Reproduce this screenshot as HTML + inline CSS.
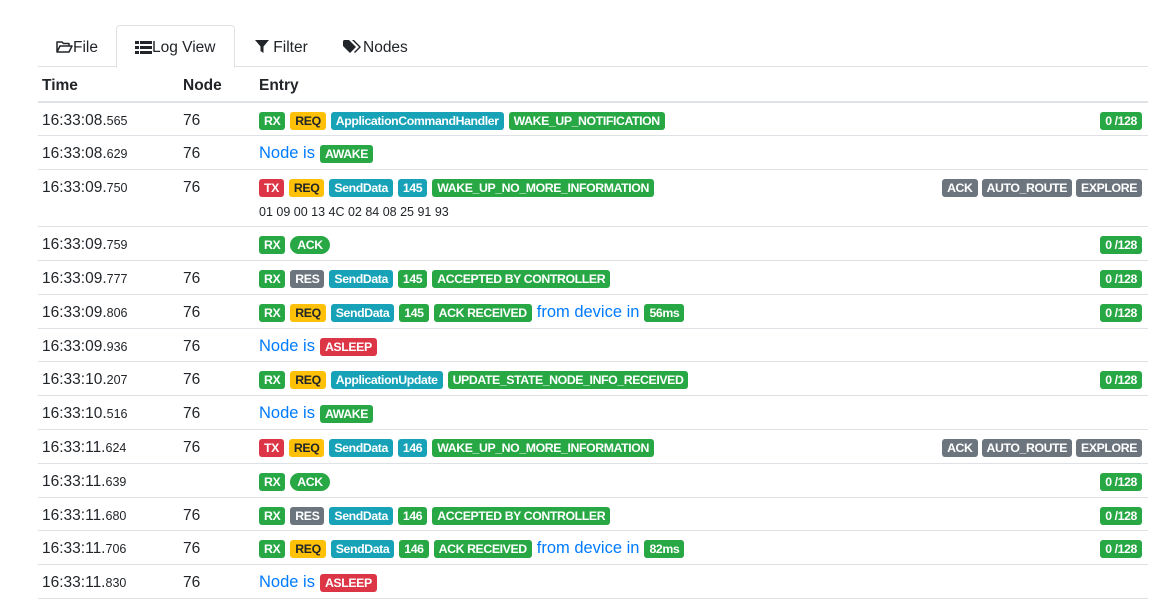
<!DOCTYPE html>
<html><head><meta charset="utf-8"><style>
*{box-sizing:border-box;margin:0;padding:0}
body{width:1174px;height:600px;background:#fff;font-family:"Liberation Sans",sans-serif;color:#212529;position:relative;overflow:hidden}
.tabs{position:absolute;left:38px;top:25px;width:1110px;height:42px;border-bottom:1px solid #dee2e6}
.tab{position:absolute;top:2px;height:42px;line-height:42px;font-size:15.5px;color:#212529}
.tab.active{top:0;line-height:44px;border:1px solid #dee2e6;border-bottom:1px solid #fff;border-radius:4px 4px 0 0;height:43px;background:#fff}
.tab svg{vertical-align:-2px}
.hdr{position:absolute;left:38px;top:67px;width:1110px;height:36px;border-bottom:2px solid #dee2e6;font-weight:bold;font-size:15.5px}
.hdr span{position:absolute;top:10px}
.row{position:absolute;left:38px;width:1110px;border-bottom:1px solid #dee2e6;font-size:15.5px}
.t{position:absolute;left:4px;top:9px}
.t small{font-size:12.5px}
.n{position:absolute;left:145px;top:9px}
.e{position:absolute;left:221px;top:8px;white-space:nowrap;display:flex;gap:5px;align-items:center;height:19px}
.r{position:absolute;right:6px;top:8px;white-space:nowrap;display:flex;gap:4px;align-items:center;height:19px}
.b{display:inline-block;font-size:12.3px;font-weight:bold;color:#fff;padding:0 5px;height:18px;line-height:18px;border-radius:3px;letter-spacing:-0.4px}
.g{background:#28a745}.y{background:#ffc107;color:#212529}.c{background:#17a2b8}.d{background:#dc3545}.s{background:#6c757d}
.p{border-radius:9px;padding:0 7px}
.bl{color:#007bff;font-size:16.5px}
.hex{position:absolute;left:221px;top:35px;font-size:12.5px}
</style></head><body>
<div class="tabs">
 <div class="tab" style="left:18px"><svg width="17" height="14" viewBox="0 0 17 14"><path d="M1 12V2h5l1.5 1.5H13v2.5M1 12l3-6h12l-3 6z" fill="none" stroke="#212529" stroke-width="1.5" stroke-linejoin="round"/></svg>File</div>
 <div class="tab active" style="left:78px;width:119px;padding-left:18px"><svg width="17" height="13" viewBox="0 0 17 13"><g fill="#212529"><rect x="0" y="0" width="4" height="3"/><rect x="5" y="0" width="12" height="3"/><rect x="0" y="5" width="4" height="3"/><rect x="5" y="5" width="12" height="3"/><rect x="0" y="10" width="4" height="3"/><rect x="5" y="10" width="12" height="3"/></g></svg>Log View</div>
 <div class="tab" style="left:217px"><svg width="14" height="14" viewBox="0 0 14 14"><path d="M0 0h14L8.5 6.5V13L5.5 11V6.5z" fill="#212529"/></svg> Filter</div>
 <div class="tab" style="left:305px"><svg width="20" height="14" viewBox="0 0 20 14"><path d="M0 1V6l7 7 6-6-7-7H1zM3 3.5a1.2 1.2 0 1 0 .01 0z" fill="#212529"/><path d="M9 0h2l7 7-6 6-1-1 5-5z" fill="#212529"/></svg>Nodes</div>
</div>
<div class="hdr"><span style="left:4px">Time</span><span style="left:145px">Node</span><span style="left:221px">Entry</span></div>

<div class="row" style="top:103px;height:33px"><span class="t">16:33:08.<small>565</small></span><span class="n">76</span><span class="e"><span class="b g">RX</span><span class="b y">REQ</span><span class="b c">ApplicationCommandHandler</span><span class="b g">WAKE_UP_NOTIFICATION</span></span><span class="r"><span class="b g">0 /128</span></span></div>
<div class="row" style="top:136px;height:34px"><span class="t">16:33:08.<small>629</small></span><span class="n">76</span><span class="e"><span class="bl">Node is</span><span class="b g">AWAKE</span></span></div>
<div class="row" style="top:170px;height:57px"><span class="t">16:33:09.<small>750</small></span><span class="n">76</span><span class="e"><span class="b d">TX</span><span class="b y">REQ</span><span class="b c">SendData</span><span class="b c">145</span><span class="b g">WAKE_UP_NO_MORE_INFORMATION</span></span><span class="hex">01 09 00 13 4C 02 84 08 25 91 93</span><span class="r"><span class="b s">ACK</span><span class="b s">AUTO_ROUTE</span><span class="b s">EXPLORE</span></span></div>
<div class="row" style="top:227px;height:34px"><span class="t">16:33:09.<small>759</small></span><span class="e"><span class="b g">RX</span><span class="b g p">ACK</span></span><span class="r"><span class="b g">0 /128</span></span></div>
<div class="row" style="top:261px;height:34px"><span class="t">16:33:09.<small>777</small></span><span class="n">76</span><span class="e"><span class="b g">RX</span><span class="b s">RES</span><span class="b c">SendData</span><span class="b g">145</span><span class="b g">ACCEPTED BY CONTROLLER</span></span><span class="r"><span class="b g">0 /128</span></span></div>
<div class="row" style="top:295px;height:34px"><span class="t">16:33:09.<small>806</small></span><span class="n">76</span><span class="e"><span class="b g">RX</span><span class="b y">REQ</span><span class="b c">SendData</span><span class="b g">145</span><span class="b g">ACK RECEIVED</span><span class="bl">from device in</span><span class="b g">56ms</span></span><span class="r"><span class="b g">0 /128</span></span></div>
<div class="row" style="top:329px;height:33px"><span class="t">16:33:09.<small>936</small></span><span class="n">76</span><span class="e"><span class="bl">Node is</span><span class="b d">ASLEEP</span></span></div>
<div class="row" style="top:362px;height:34px"><span class="t">16:33:10.<small>207</small></span><span class="n">76</span><span class="e"><span class="b g">RX</span><span class="b y">REQ</span><span class="b c">ApplicationUpdate</span><span class="b g">UPDATE_STATE_NODE_INFO_RECEIVED</span></span><span class="r"><span class="b g">0 /128</span></span></div>
<div class="row" style="top:396px;height:34px"><span class="t">16:33:10.<small>516</small></span><span class="n">76</span><span class="e"><span class="bl">Node is</span><span class="b g">AWAKE</span></span></div>
<div class="row" style="top:430px;height:34px"><span class="t">16:33:11.<small>624</small></span><span class="n">76</span><span class="e"><span class="b d">TX</span><span class="b y">REQ</span><span class="b c">SendData</span><span class="b c">146</span><span class="b g">WAKE_UP_NO_MORE_INFORMATION</span></span><span class="r"><span class="b s">ACK</span><span class="b s">AUTO_ROUTE</span><span class="b s">EXPLORE</span></span></div>
<div class="row" style="top:464px;height:34px"><span class="t">16:33:11.<small>639</small></span><span class="e"><span class="b g">RX</span><span class="b g p">ACK</span></span><span class="r"><span class="b g">0 /128</span></span></div>
<div class="row" style="top:498px;height:33px"><span class="t">16:33:11.<small>680</small></span><span class="n">76</span><span class="e"><span class="b g">RX</span><span class="b s">RES</span><span class="b c">SendData</span><span class="b g">146</span><span class="b g">ACCEPTED BY CONTROLLER</span></span><span class="r"><span class="b g">0 /128</span></span></div>
<div class="row" style="top:531px;height:34px"><span class="t">16:33:11.<small>706</small></span><span class="n">76</span><span class="e"><span class="b g">RX</span><span class="b y">REQ</span><span class="b c">SendData</span><span class="b g">146</span><span class="b g">ACK RECEIVED</span><span class="bl">from device in</span><span class="b g">82ms</span></span><span class="r"><span class="b g">0 /128</span></span></div>
<div class="row" style="top:565px;height:34px"><span class="t">16:33:11.<small>830</small></span><span class="n">76</span><span class="e"><span class="bl">Node is</span><span class="b d">ASLEEP</span></span></div>
</body></html>
